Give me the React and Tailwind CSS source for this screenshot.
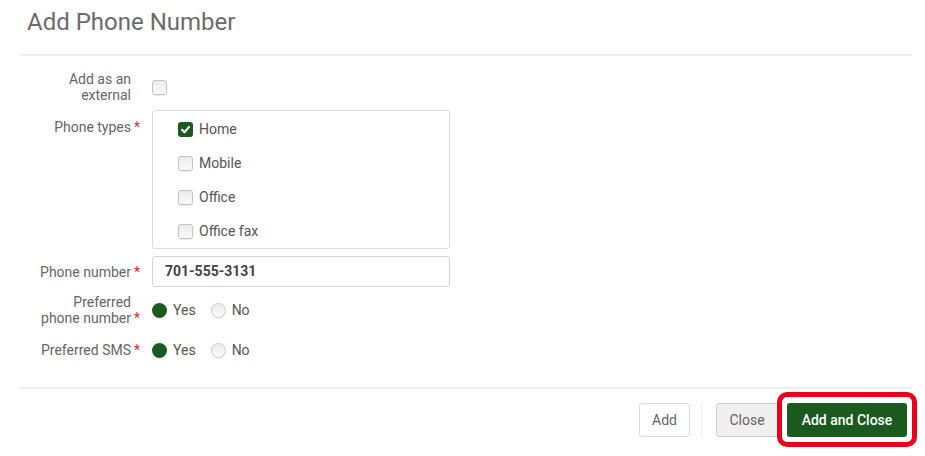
import React from "react";

const F = { fontFamily: "Roboto, 'Liberation Sans', Arial, sans-serif" };

function Star() {
  return <span className="text-[#e0282e] text-[14px]">*</span>;
}

function Label({ children, star }) {
  return (
    <div className="flex shrink-0">
      <div className="w-[112px] text-right text-[14px] leading-[16px] text-[#666]">
        {children}
      </div>
      <div className="w-[21px] pl-[3px] text-[14px] leading-[16px] flex items-end">
        {star ? <Star /> : null}
      </div>
    </div>
  );
}

function Box({ checked }) {
  if (checked) {
    return (
      <span className="w-[15px] h-[15px] rounded-[3px] bg-[#1a5a1f] flex items-center justify-center shrink-0">
        <svg width="11" height="11" viewBox="0 0 12 12">
          <path d="M2.2 6.3 L4.9 9 L9.9 3.2" fill="none" stroke="#fff" strokeWidth="2.2" strokeLinecap="round" strokeLinejoin="round" />
        </svg>
      </span>
    );
  }
  return (
    <span className="block w-[15px] h-[15px] rounded-[3px] border border-[#c3c3c3] bg-gradient-to-b from-[#ececec] to-[#fafafa] shadow-[0_1px_1px_rgba(0,0,0,0.08)] shrink-0" />
  );
}

function Radio({ on }) {
  if (on) {
    return <span className="block w-[15px] h-[15px] rounded-full bg-[#1a5a1f] shrink-0" />;
  }
  return (
    <span className="block w-[15px] h-[15px] rounded-full border border-[#c8c8c8] bg-gradient-to-b from-[#ececec] to-[#fafafa] shadow-[0_1px_1px_rgba(0,0,0,0.06)] shrink-0" />
  );
}

function RadioPair() {
  return (
    <div className="flex items-center text-[14px] text-[#555]">
      <Radio on />
      <span className="ml-[6px]">Yes</span>
      <span className="ml-[15px] flex"><Radio /></span>
      <span className="ml-[6px]">No</span>
    </div>
  );
}

export default function App() {
  const types = [
    ["Home", true],
    ["Mobile", false],
    ["Office", false],
    ["Office fax", false],
  ];
  return (
    <div style={F} className="w-[925px] h-[456px] bg-white overflow-hidden relative">
      <div className="pl-[27px] pt-[8px] h-[54px]">
        <h1 className="text-[24px] leading-[28px] text-[#6b6b6b] font-normal">Add Phone Number</h1>
      </div>
      <div className="ml-[19px] mr-[13px] h-[2px] bg-[#eeeeee]" />

      <div className="pl-[19px] pt-[15px] flex flex-col">
        <div className="flex items-center h-[32px]">
          <Label>
            Add as an
            <br />
            external
          </Label>
          <Box />
        </div>

        <div className="flex mt-[7px]">
          <div className="pt-[9px]">
            <Label star>Phone types</Label>
          </div>
          <div className="w-[298px] h-[139px] border border-[#dcdcdc] rounded-[3px] py-[1px]">
            {types.map(([t, c]) => (
              <div key={t} className="h-[34.25px] flex items-center pl-[25px]">
                <Box checked={c} />
                <span className="ml-[6px] text-[14px] text-[#555]">{t}</span>
              </div>
            ))}
          </div>
        </div>

        <div className="flex items-center mt-[7px]">
          <Label star>Phone number</Label>
          <div className="w-[298px] h-[31px] border border-[#d4d4d4] rounded-[3px] flex items-center pl-[12px] text-[14px] font-bold text-[#444]">
            701-555-3131
          </div>
        </div>

        <div className="flex items-center h-[32px] mt-[7px]">
          <Label star>
            Preferred
            <br />
            phone number
          </Label>
          <RadioPair />
        </div>

        <div className="flex items-center h-[32px] mt-[8px]">
          <Label star>Preferred SMS</Label>
          <RadioPair />
        </div>
      </div>

      <div className="ml-[19px] mr-[13px] h-[2px] bg-[#eeeeee] mt-[21px]" />

      <div className="flex justify-end items-center pr-[18px] mt-[14px]">
        <button className="h-[34px] w-[51px] border border-[#dcdcdc] rounded-[3px] bg-white text-[14px] text-[#666]">
          Add
        </button>
        <div className="w-px h-[34px] bg-[#eeeeee] ml-[11px] mr-[14px]" />
        <button className="h-[34px] w-[62px] border border-[#cccccc] rounded-[3px] bg-[#efefef] text-[14px] text-[#666]">
          Close
        </button>
        <div className="relative ml-[9px]">
          <button className="h-[34px] w-[120px] rounded-[3px] bg-[#1a5a1f] text-[14px] font-medium text-white">
            Add and Close
          </button>
          <div className="absolute -left-[10px] -right-[10px] -top-[11px] -bottom-[10px] border-[5px] border-[#e8001c] rounded-[10px] pointer-events-none" />
        </div>
      </div>
    </div>
  );
}
